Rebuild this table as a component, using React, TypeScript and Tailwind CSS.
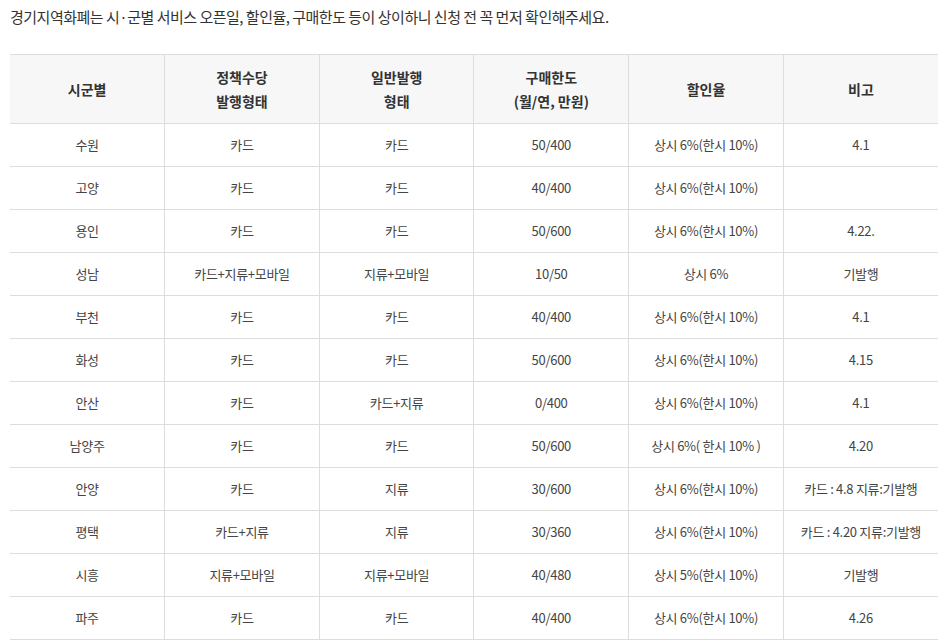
const rows: [string, string, string, string, string, string][] = [
  ['수원', '카드', '카드', '50/400', '상시 6%(한시 10%)', '4.1'],
  ['고양', '카드', '카드', '40/400', '상시 6%(한시 10%)', ''],
  ['용인', '카드', '카드', '50/600', '상시 6%(한시 10%)', '4.22.'],
  ['성남', '카드+지류+모바일', '지류+모바일', '10/50', '상시 6%', '기발행'],
  ['부천', '카드', '카드', '40/400', '상시 6%(한시 10%)', '4.1'],
  ['화성', '카드', '카드', '50/600', '상시 6%(한시 10%)', '4.15'],
  ['안산', '카드', '카드+지류', '0/400', '상시 6%(한시 10%)', '4.1'],
  ['남양주', '카드', '카드', '50/600', '상시 6%( 한시 10% )', '4.20'],
  ['안양', '카드', '지류', '30/600', '상시 6%(한시 10%)', '카드 : 4.8 지류:기발행'],
  ['평택', '카드+지류', '지류', '30/360', '상시 6%(한시 10%)', '카드 : 4.20 지류:기발행'],
  ['시흥', '지류+모바일', '지류+모바일', '40/480', '상시 5%(한시 10%)', '기발행'],
  ['파주', '카드', '카드', '40/400', '상시 6%(한시 10%)', '4.26'],
];

const headers: string[][] = [
  ['시군별'],
  ['정책수당', '발행형태'],
  ['일반발행', '형태'],
  ['구매한도', '(월/연, 만원)'],
  ['할인율'],
  ['비고'],
];

export default function App() {
  return (
    <div
      className="min-h-screen bg-white pl-[10px] pr-[9px] pt-[6px]"
      style={{ fontFamily: '"Noto Sans CJK KR", "Noto Sans", sans-serif' }}
    >
      <p className="text-[15px] leading-[22px] tracking-[-0.5px] text-[#333]">
        경기지역화폐는 시·군별 서비스 오픈일, 할인율, 구매한도 등이 상이하니 신청 전 꼭 먼저 확인해주세요.
      </p>
      <table className="mt-[26px] w-full table-fixed border-collapse">
        <thead>
          <tr className="h-[69px] bg-[#f7f7f7]">
            {headers.map((lines, i) => (
              <th
                key={i}
                className={`border-y border-[#dddddd] text-center align-middle text-[14px] font-bold leading-[24px] text-[#333] ${
                  i > 0 ? 'border-l' : ''
                }`}
              >
                {lines.map((l) => (
                  <div key={l}>{l}</div>
                ))}
              </th>
            ))}
          </tr>
        </thead>
        <tbody>
          {rows.map((row) => (
            <tr key={row[0]} className="h-[43px]">
              {row.map((cell, i) => (
                <td
                  key={i}
                  className={`border-b border-[#dddddd] text-center align-middle text-[13px] leading-[20px] tracking-[-0.3px] text-[#444] ${
                    i > 0 ? 'border-l' : ''
                  }`}
                >
                  {cell}
                </td>
              ))}
            </tr>
          ))}
        </tbody>
      </table>
    </div>
  );
}
